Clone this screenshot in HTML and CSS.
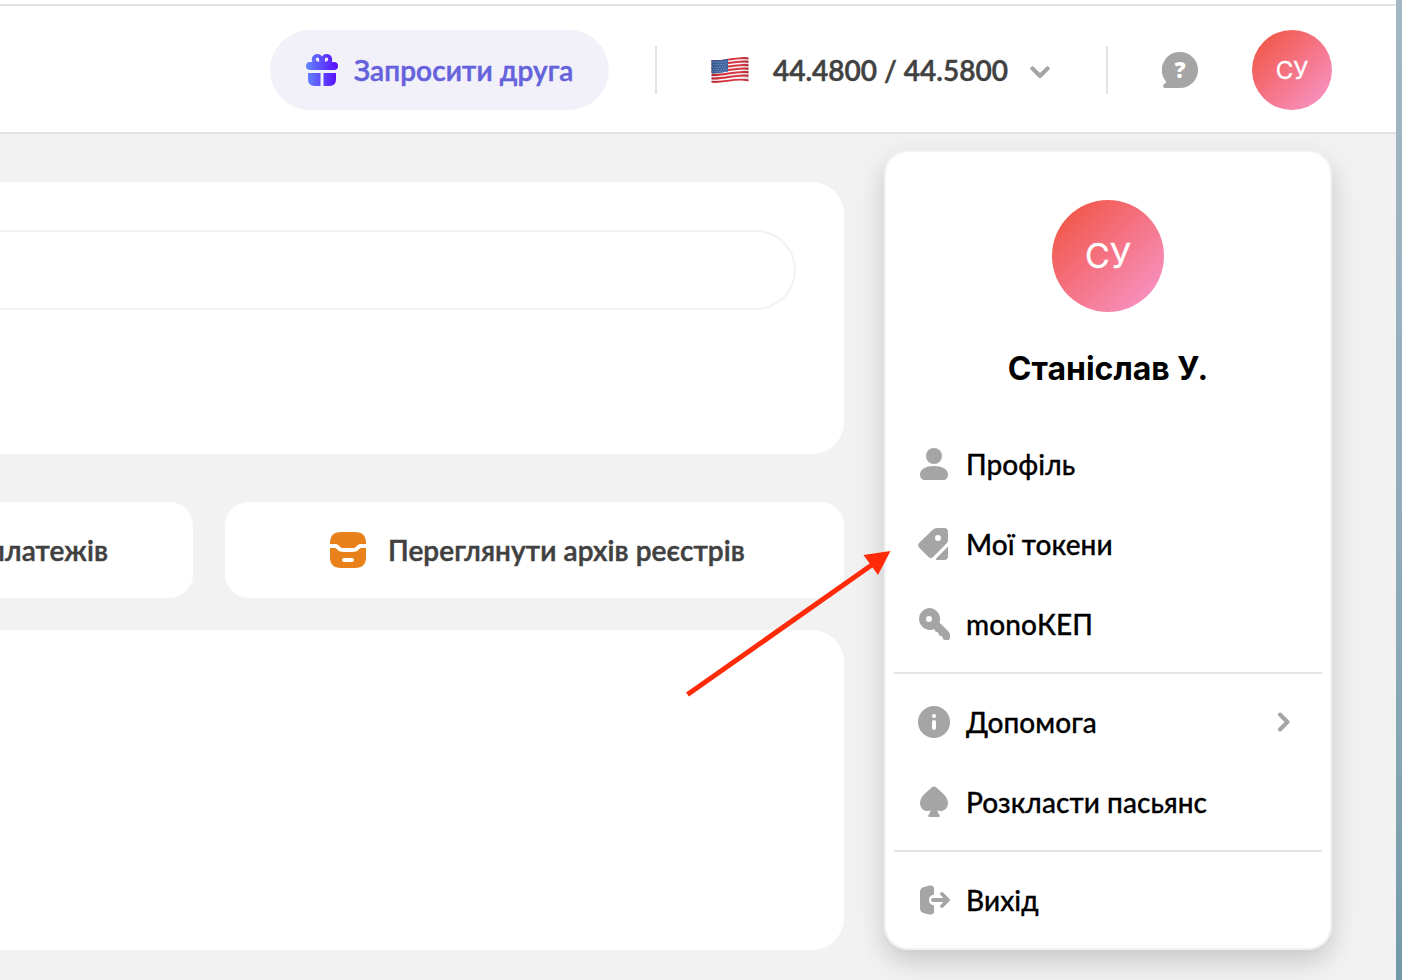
FILE: index.html
```html
<!DOCTYPE html>
<html lang="uk">
<head>
<meta charset="utf-8">
<title>Кабінет</title>
<link rel="stylesheet" href="styles.css">
</head>
<body>
<div class="desktop">
  <div class="app">
    <header class="header">
      <button class="invite">
        <svg width="32" height="34" viewBox="0 0 32 34">
          <defs><linearGradient id="gift" gradientUnits="userSpaceOnUse" x1="0" y1="0" x2="32" y2="0"><stop offset="0" stop-color="#6188ff"/><stop offset="1" stop-color="#5a0aff"/></linearGradient></defs>
          <path fill="url(#gift)" fill-rule="evenodd" d="M4 17a4 4 0 0 1 0-8h2.200C4.800 4.800 7.200 1 11 1c2.300 0 4 .8 5 2.500C17 1.800 18.700 1 21 1c3.800 0 6.200 3.800 4.800 8H28a4 4 0 0 1 0 8ZM13.200 6.500a1.700 2 0 1 0-3.400 0c0 1.400 1.400 2 3.200 2.400ZM18.800 6.500l.2 2.400c1.800-.4 3.200-1 3.200-2.400a1.700 2 0 1 0-3.400 0ZM2 20h12.500v13H8.500Q2 33 2 26.500ZM17.500 20H30v6.500Q30 33 23.500 33h-6Z"/>
        </svg>
        <span class="invite-label">Запросити друга</span>
      </button>
      <span class="rule"></span>
      <div class="rates">
        <svg class="flag" width="38" height="28" viewBox="0 0 38 28">
          <defs>
            <clipPath id="wave"><path d="M.5 4C12 5.500 24-.5 37.500 1.500V25.500C24 23.500 13 29 .5 26.500Z"/></clipPath>
            <linearGradient id="shade"><stop offset="0" stop-color="#000" stop-opacity=".15"/><stop offset=".3" stop-color="#fff" stop-opacity=".05"/><stop offset=".75" stop-color="#fff" stop-opacity=".12"/><stop offset="1" stop-color="#000" stop-opacity=".14"/></linearGradient>
          </defs>
          <g clip-path="url(#wave)">
            <path fill="#f6f4f4" d="M0 0h38v28H0z"/>
            <g fill="none" stroke="#d3202f" stroke-width="1.850">
              <path d="M0 4.800C12 6.300 24 .3 38 2.300M0 8.300C12 9.800 24 3.800 38 5.800M0 11.800C12 13.300 24 7.300 38 9.300M0 15.300C12 16.800 24 10.800 38 12.800M0 18.800C12 20.300 24 14.300 38 16.300M0 22.300C12 23.800 24 17.800 38 19.800M0 25.800C12 27.300 24 21.300 38 24.500"/>
            </g>
            <path fill="#31599b" d="M0 3.500Q8 5 17 2.400V15.600Q8 18 0 17.200Z"/>
            <path fill="none" stroke="#a9bddb" stroke-width=".9" stroke-dasharray="1 1.500" d="M1 6q8 1 15-1M2 8.500q8 1 14-1M1 11q8 1 15-1M2 13.500q8 1 14-1M1 15.500q8 1 15-1"/>
            <path fill="url(#shade)" d="M0 0h38v28H0z"/>
          </g>
        </svg>
        <span class="rate-text">44.4800 / 44.5800</span>
        <svg class="caret" width="20" height="14" viewBox="0 0 20 14"><path d="M2.500 3.500 10 11l7.500-7.500" fill="none" stroke="#a5a5a5" stroke-width="4.200" stroke-linecap="round" stroke-linejoin="round"/></svg>
      </div>
      <span class="rule rule-end"></span>
      <svg class="help" width="36" height="38" viewBox="0 0 36 38">
        <path fill="#a5a5a5" d="M18 1a18 18 0 0 1 0 36H3c-2.200 0-2.600-2.600-1-3.700l1.500-1.200c.7-.6.600-1.300.1-2.100A18 18 0 0 1 18 1Z"/>
        <text x="18" y="26.500" text-anchor="middle" class="help-mark">?</text>
      </svg>
      <div class="avatar">СУ</div>
    </header>
    <main class="content">
      <section class="card search-card"><div class="search"></div></section>
      <div class="actions">
        <div class="card action action-cut"><span class="action-label">платежів</span></div>
        <div class="card action action-archive">
          <svg width="36" height="36" viewBox="0 0 36 36">
            <path fill="#e8811a" d="M11 0h14q11 0 11 11v1h-4c-3 0-4 .5-5.500 2.300C25 16 24.500 16 22 16h-8c-2.500 0-3 0-4.500-1.700C8 12.500 7 12 4 12H0v-1Q0 0 11 0ZM0 16h4c1.500 0 2 .4 3.200 1.600C9 19.600 10.500 20 14 20h8c3.500 0 5-.4 6.800-2.400C30 16.400 30.500 16 32 16h4v9q0 11-11 11H11Q0 36 0 25Z"/>
            <rect x="12" y="26" width="12" height="4" rx="2" fill="#fff"/>
          </svg>
          <span class="action-label">Переглянути архів реєстрів</span>
        </div>
      </div>
      <section class="card list-card"></section>
    </main>
  </div>
  <div class="wallpaper"></div>

  <aside class="menu">
    <div class="avatar avatar-large">СУ</div>
    <h2 class="name">Станіслав У.</h2>
    <nav class="items">
      <a class="item"><svg class="icon" viewBox="0 0 32 32"><circle cx="16" cy="8" r="8"/><path d="M16 18c8 0 14 3 14 8.500C30 30 28 32 25 32H7c-3 0-5-2-5-5.500C2 21 8 18 16 18Z"/></svg><span>Профіль</span></a>
      <a class="item"><svg class="icon" viewBox="0 0 32 32"><path fill-rule="evenodd" d="M19 0h7q4 0 4 4v8q0 2-1.500 3.500L15 29q-2.200 2-4.500 0L1 19.500q-2-2.200 0-4.500L15 1.500Q16.700 0 19 0Zm4 10a3 3 0 1 0-6 0 3 3 0 0 0 6 0Z"/><path d="M30 18.500V28q0 4-4 4h-7q-2-.2-.8-1.500Z"/></svg><span>Мої токени</span></a>
      <a class="item"><svg class="icon" viewBox="0 0 32 32"><path fill-rule="evenodd" d="M11 0a11 11 0 0 1 10.500 14.500l9 9Q32 25 32 27v3q0 2-2 2h-3q-2 0-2.500-2.300l-.3-1.400-1.500-.3q-2-.3-2.200-2.200l-.2-1.300-1.500-.4q-1.500-.4-2-1.500l-.5-1.500A11 11 0 1 1 11 0Zm3 11a3 3 0 1 0-6 0 3 3 0 0 0 6 0Z"/></svg><span>monoКЕП</span></a>
      <hr class="separator">
      <a class="item"><svg class="icon" viewBox="0 0 32 32"><circle cx="16" cy="16" r="16"/><circle cx="16" cy="10" r="2" fill="#fff"/><rect x="14" y="14" width="4" height="10" rx="2" fill="#fff"/></svg><span>Допомога</span>
        <svg class="arrow" width="14" height="20" viewBox="0 0 14 20"><path d="m3 2.500 7.500 7.500L3 17.500" fill="none" stroke="#a5a5a5" stroke-width="4" stroke-linecap="round" stroke-linejoin="round"/></svg></a>
      <a class="item"><svg class="icon" viewBox="0 0 32 32"><path d="M14 1.300q2-1.600 4 0C23 6 30 10.500 30 17c0 6.800-6.500 9.500-10.500 7.300.1 1.800.5 2.700 1.800 4.500 1 1.400.7 2.200-1 2.200h-8.600c-1.700 0-2-.8-1-2.200 1.300-1.800 1.700-2.700 1.800-4.500C8.500 26.500 2 23.800 2 17 2 10.500 9 6 14 1.300Z"/></svg><span>Розкласти пасьянс</span></a>
      <hr class="separator">
      <a class="item"><svg class="icon" viewBox="0 0 32 32"><path d="M2 8q0-4 4-5l5.500-1.500Q16 .8 16 5v5.500q-5 1-5 5.500t5 5.500V27q0 4.200-4.500 3.500L6 29.200q-4-1-4-5Z"/><path d="M15 16h14M24 10l6 6-6 6" fill="none" stroke="#a5a5a5" stroke-width="3.800" stroke-linecap="round" stroke-linejoin="round"/></svg><span>Вихід</span></a>
    </nav>
  </aside>

  <svg class="pointer" width="208" height="150" viewBox="0 0 208 150"><path d="M1.500 146.500 190 14" stroke="#ff2a08" stroke-width="5"/><path fill="#ff2a08" d="M204.500 3 177.500 7l14.500 20Z"/></svg>
</div>
</body>
</html>
```
FILE: styles.css
```css
* { box-sizing: border-box; }
body { margin: 0; font-family: Lato, sans-serif; font-size: 28px; color: #000; }
.desktop { position: relative; display: flex; width: 1402px; height: 980px; overflow: hidden; }
.app { width: 1396px; background: #f2f2f2; }
.wallpaper { flex: 1; background: linear-gradient(#a3b7c5, #91acbb 50%, #86a6b3 75%, #7199a9); }

.header { position: relative; z-index: 1; display: flex; align-items: center; height: 134px; padding: 8px 64px 0 270px; background: #fff; border-bottom: 2px solid #e2e2e2; box-shadow: inset 0 4px #fff, inset 0 6px #e2e2e2; }
.invite { display: flex; align-items: center; gap: 16px; width: 339px; height: 80px; padding: 0 35px 0 36px; border: 0; border-radius: 40px; background: #f2f1fa; color: #6562dc; font: 600 28px Lato, sans-serif; letter-spacing: .1px; -webkit-text-stroke: .5px; }
.invite-label { white-space: nowrap; }
.rule { width: 2px; height: 48px; margin-left: 46px; background: #e2e2e2; }
.rates { display: flex; align-items: center; width: 340px; margin-left: 54px; color: #414141; font-weight: 600; }
.rate-text { width: 235px; margin: 0 22px 0 24px; white-space: nowrap; -webkit-text-stroke: .5px; }
.caret { margin-top: 3px; }
.rule-end { margin-left: 55px; }
.help { margin-left: 54px; }
.help-mark { fill: #fff; font: 800 22px "Open Sans", sans-serif; }
.avatar { display: flex; align-items: center; justify-content: center; width: 80px; height: 80px; margin-left: 54px; border-radius: 50%; background: linear-gradient(135deg, #f25a50 15%, #f78fbd 87%); color: #fff; font: 400 24px Inter, sans-serif; -webkit-text-stroke: .3px; }

.content { padding-top: 48px; }
.card { background: #fff; }
.search-card { width: 844px; height: 272px; padding: 48px 48px 0 0; border-radius: 0 32px 32px 0; }
.search { height: 80px; border: 2px solid #f2f2f2; border-left: 0; border-radius: 0 40px 40px 0; }
.actions { display: flex; gap: 32px; margin: 48px 0 32px; }
.action { display: flex; align-items: center; height: 96px; border-radius: 24px; color: #414141; font-weight: 600; letter-spacing: .1px; white-space: nowrap; -webkit-text-stroke: .5px; }
.action-cut { justify-content: flex-end; width: 193px; padding-right: 85px; border-radius: 0 24px 24px 0; }
.action-archive { gap: 22px; width: 619px; padding-left: 105px; }
.list-card { width: 844px; height: 320px; border-radius: 0 32px 32px 0; }

.menu { position: absolute; left: 884px; top: 150px; width: 448px; height: 800px; padding: 48px 8px 0; border: 2px solid #f2f2f2; border-radius: 24px; background: #fff; box-shadow: 0 12px 24px rgba(0,0,0,.14), 0 8px 48px rgba(0,0,0,.045); }
.avatar-large { width: 112px; height: 112px; margin: 0 auto; padding-bottom: 2px; font-size: 34px; }
.name { height: 40px; margin: 37px 0 35px; font: 700 32px/40px Inter, sans-serif; text-align: center; }
.item { display: flex; align-items: center; gap: 16px; height: 80px; padding: 0 31px 0 24px; font-weight: 500; letter-spacing: .06px; white-space: nowrap; }
.item span { -webkit-text-stroke: .3px; }
.icon { width: 32px; height: 32px; fill: #a5a5a5; }
.arrow { margin-left: auto; }
.separator { height: 2px; margin: 8px 0; border: 0; background: #e4e4e4; }
.pointer { position: absolute; z-index: 2; left: 686px; top: 548px; }
```
